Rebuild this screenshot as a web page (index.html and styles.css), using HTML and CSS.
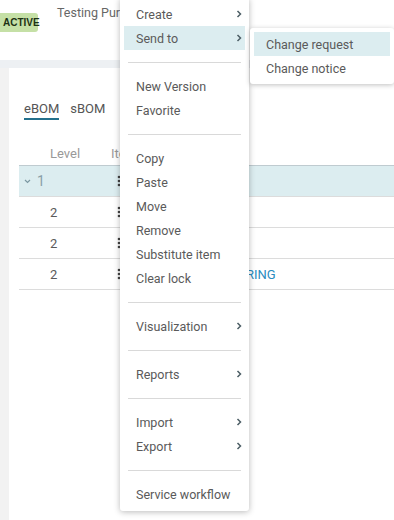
FILE: index.html
```html
<!DOCTYPE html>
<html lang="en">
<head>
  <meta charset="UTF-8" />
  <meta name="viewport" content="width=device-width, initial-scale=1" />
  <title>BOM</title>
  <link rel="stylesheet" href="styles.css">
</head>
<body>

  <header class="cabecera">
    <span class="estado">ACTIVE</span>
    <span class="titulo">Testing Purchased Part</span>
  </header>
  <div class="franja"></div>

  <main class="contenido">
    <div class="margen"></div>
    <section class="panel">
      <nav class="pestanas">
        <span class="pestana activa">eBOM</span>
        <span class="pestana">sBOM</span>
      </nav>

      <div class="tabla">
        <div class="fila cabeza">
          <div class="col-nivel">Level</div>
          <div class="col-item">Item</div>
        </div>
        <div class="fila seleccionada">
          <div class="col-nivel raiz">
            <svg class="plegar" width="7" height="5" viewBox="0 0 7 5"><path d="M1 1l2.5 2.5L6 1" fill="none" stroke="#7c98a2" stroke-width="1.2"/></svg>
            <span>1</span>
          </div>
          <div class="col-item"><svg class="kebab" width="4" height="12" viewBox="0 0 4 12"><circle cx="2" cy="2" r="1.3"/><circle cx="2" cy="6" r="1.3"/><circle cx="2" cy="10" r="1.3"/></svg></div>
        </div>
        <div class="fila">
          <div class="col-nivel">2</div>
          <div class="col-item"><svg class="kebab" width="4" height="12" viewBox="0 0 4 12"><circle cx="2" cy="2" r="1.3"/><circle cx="2" cy="6" r="1.3"/><circle cx="2" cy="10" r="1.3"/></svg></div>
        </div>
        <div class="fila">
          <div class="col-nivel">2</div>
          <div class="col-item"><svg class="kebab" width="4" height="12" viewBox="0 0 4 12"><circle cx="2" cy="2" r="1.3"/><circle cx="2" cy="6" r="1.3"/><circle cx="2" cy="10" r="1.3"/></svg></div>
        </div>
        <div class="fila">
          <div class="col-nivel">2</div>
          <div class="col-item"><svg class="kebab" width="4" height="12" viewBox="0 0 4 12"><circle cx="2" cy="2" r="1.3"/><circle cx="2" cy="6" r="1.3"/><circle cx="2" cy="10" r="1.3"/></svg><a class="enlace">SNAP RETAINING RING</a></div>
        </div>
      </div>
    </section>
  </main>

  <ul class="menu">
    <li class="opcion">Create <svg class="flecha" width="6" height="8" viewBox="0 0 6 8"><path d="M1.5 1l3 3-3 3" fill="none" stroke="#4d5f66" stroke-width="1.5"/></svg></li>
    <li class="opcion activa">Send to <svg class="flecha" width="6" height="8" viewBox="0 0 6 8"><path d="M1.5 1l3 3-3 3" fill="none" stroke="#4d5f66" stroke-width="1.5"/></svg></li>
    <li class="separador"></li>
    <li class="opcion">New Version</li>
    <li class="opcion">Favorite</li>
    <li class="separador"></li>
    <li class="opcion">Copy</li>
    <li class="opcion">Paste</li>
    <li class="opcion">Move</li>
    <li class="opcion">Remove</li>
    <li class="opcion">Substitute item</li>
    <li class="opcion">Clear lock</li>
    <li class="separador"></li>
    <li class="opcion">Visualization <svg class="flecha" width="6" height="8" viewBox="0 0 6 8"><path d="M1.5 1l3 3-3 3" fill="none" stroke="#4d5f66" stroke-width="1.5"/></svg></li>
    <li class="separador"></li>
    <li class="opcion">Reports <svg class="flecha" width="6" height="8" viewBox="0 0 6 8"><path d="M1.5 1l3 3-3 3" fill="none" stroke="#4d5f66" stroke-width="1.5"/></svg></li>
    <li class="separador"></li>
    <li class="opcion">Import <svg class="flecha" width="6" height="8" viewBox="0 0 6 8"><path d="M1.5 1l3 3-3 3" fill="none" stroke="#4d5f66" stroke-width="1.5"/></svg></li>
    <li class="opcion">Export <svg class="flecha" width="6" height="8" viewBox="0 0 6 8"><path d="M1.5 1l3 3-3 3" fill="none" stroke="#4d5f66" stroke-width="1.5"/></svg></li>
    <li class="separador"></li>
    <li class="opcion">Service workflow</li>
  </ul>

  <ul class="submenu">
    <li class="opcion activa">Change request</li>
    <li class="opcion">Change notice</li>
  </ul>

</body>
</html>
```

FILE: styles.css
```css
* { box-sizing: border-box; }
body {
  font-family: Roboto, 'Noto Sans', sans-serif;
  font-size: 12.5px;
  color: #5a5a5a;
  background: #f2f2f2;
  margin: 0;
  height: 520px;
  overflow: hidden;
  position: relative;
}

.cabecera {
  height: 60px;
  background: white;
  position: relative;
}
.estado {
  position: absolute;
  left: 0;
  top: 13px;
  height: 19px;
  width: 38px;
  padding-left: 3px;
  line-height: 19px;
  background: #c5e0a6;
  border-radius: 0 3px 3px 0;
  font-family: 'Liberation Sans', Arial, sans-serif;
  font-size: 10px;
  font-weight: 700;
  color: #1d3214;
}
.titulo {
  position: absolute;
  left: 57px;
  top: 5px;
  font-size: 12.5px;
  color: #666;
  white-space: nowrap;
}

.franja {
  height: 8px;
  background: #edf0f3;
}

.contenido {
  display: flex;
  height: 452px;
}
.margen {
  width: 9px;
  background: #f2f2f2;
}
.panel {
  flex: 1;
  background: white;
  padding: 32px 0 0 10px;
}

.pestanas {
  display: flex;
  gap: 11px;
  margin-left: 5px;
  height: 20px;
  font-size: 13px;
}
.pestana {
  color: #555;
  line-height: 18px;
}
.pestana.activa {
  border-bottom: 2px solid #23708c;
}

.tabla {
  margin-top: 22px;
  font-size: 13px;
}
.fila {
  display: flex;
  align-items: center;
  height: 31px;
  border-bottom: 1px solid #dcdcdc;
}
.fila.cabeza {
  height: 24px;
  border-bottom-color: #bfcbd0;
  color: #999;
}
.fila.seleccionada {
  background: #dcedf0;
  color: #8aa0a8;
  font-size: 14px;
}
.col-nivel {
  width: 92px;
  padding-left: 31px;
  display: flex;
  align-items: center;
}
.col-nivel.raiz {
  padding-left: 5px;
  gap: 6px;
}
.col-item {
  display: flex;
  align-items: center;
  gap: 19px;
  white-space: nowrap;
}
.kebab {
  margin-left: 6px;
  fill: #444;
}
.enlace {
  color: #2a8cc0;
}

.menu {
  position: absolute;
  left: 120px;
  top: -2px;
  width: 129px;
  margin: 0;
  padding: 4px 4px 5px;
  list-style: none;
  background: white;
  border-radius: 0 0 3px 3px;
  box-shadow: 0 1px 6px rgba(0,0,0,0.28);
}
.opcion {
  height: 24px;
  padding: 0 3px 0 12px;
  display: flex;
  align-items: center;
  justify-content: space-between;
  color: #5a5a5a;
  white-space: nowrap;
}
.opcion.activa {
  background: #dcedf0;
}
.separador {
  height: 1px;
  margin: 12px 4px 11px;
  background: #d9d9d9;
}

.submenu {
  position: absolute;
  left: 250px;
  top: 28px;
  width: 144px;
  margin: 0;
  padding: 4px;
  list-style: none;
  background: white;
  border-radius: 3px;
  box-shadow: 0 1px 5px rgba(0,0,0,0.25);
}
```
